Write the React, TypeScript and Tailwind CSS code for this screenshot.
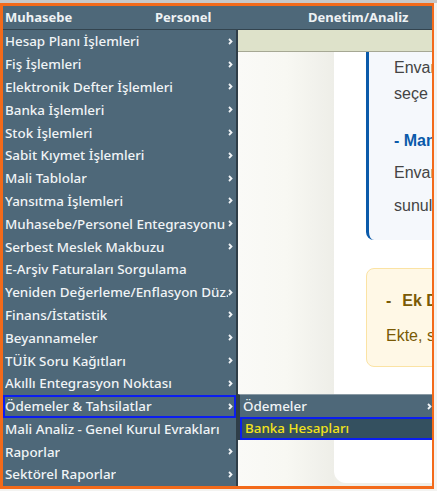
import React from 'react';

const menuItems: { label: string; sub?: boolean; active?: boolean }[] = [
  { label: 'Hesap Planı İşlemleri', sub: true },
  { label: 'Fiş İşlemleri', sub: true },
  { label: 'Elektronik Defter İşlemleri', sub: true },
  { label: 'Banka İşlemleri', sub: true },
  { label: 'Stok İşlemleri', sub: true },
  { label: 'Sabit Kıymet İşlemleri', sub: true },
  { label: 'Mali Tablolar', sub: true },
  { label: 'Yansıtma İşlemleri', sub: true },
  { label: 'Muhasebe/Personel Entegrasyonu', sub: true },
  { label: 'Serbest Meslek Makbuzu', sub: true },
  { label: 'E-Arşiv Faturaları Sorgulama' },
  { label: 'Yeniden Değerleme/Enflasyon Düz.', sub: true },
  { label: 'Finans/İstatistik', sub: true },
  { label: 'Beyannameler', sub: true },
  { label: 'TÜİK Soru Kağıtları', sub: true },
  { label: 'Akıllı Entegrasyon Noktası', sub: true },
  { label: 'Ödemeler & Tahsilatlar', sub: true, active: true },
  { label: 'Mali Analiz - Genel Kurul Evrakları' },
  { label: 'Raporlar', sub: true },
  { label: 'Sektörel Raporlar', sub: true },
];

const Chevron = () => (
  <svg width="5" height="7" viewBox="0 0 5 7" className="shrink-0">
    <path d="M1 1 L3.5 3.5 L1 6" fill="none" stroke="#f2f5f7" strokeWidth="1.8" />
  </svg>
);

const App = () => {
  return (
    <div
      className="relative w-[437px] h-[491px] overflow-hidden bg-[#f3f3f1] border-t-[3px] border-[#c8c8c8]"
      style={{ fontFamily: '"Noto Sans", "Open Sans", sans-serif' }}
    >
      {/* orange outline around the whole app */}
      <div className="relative w-[434px] h-[486px] border-[3px] border-r-[2px] border-[#f36a1a] overflow-hidden bg-white">
        {/* top bar */}
        <div className="flex h-[24px] items-center bg-[#4e6879] border-b border-[#33444f] text-[13px] font-bold text-[#eef2f4]">
          <span className="w-[152px] pl-[2px]">Muhasebe</span>
          <span className="w-[153px]">Personel</span>
          <span>Denetim/Analiz</span>
        </div>

        <div className="flex h-[calc(100%-24px)]">
          {/* left menu */}
          <div className="w-[235px] shrink-0 bg-[#4e6879] border-r-2 border-[#2f3e48]">
            {menuItems.map((item) => (
              <div
                key={item.label}
                className={`flex h-[22.8px] items-center justify-between pl-[2px] pr-[3px] text-[13.4px] font-medium text-[#f1f4f6] whitespace-nowrap ${
                  item.active ? 'outline-2 outline-[#0b1ef0] -outline-offset-2' : ''
                }`}
              >
                <span className="overflow-hidden">{item.label}</span>
                {item.sub && <Chevron />}
              </div>
            ))}
          </div>

          {/* page content */}
          <div className="flex-1 flex flex-col min-w-0">
            <div className="h-[22px] shrink-0 bg-[#dee2ca] border-b border-[#a6a894]" />
            <div className="flex flex-1 bg-[#efefe9]">
              <div className="w-[96px] shrink-0 bg-gradient-to-r from-[#fafaf7] via-[#f8f8f3] to-[#eeeee8]" />
              <div
                className="flex-1 min-w-0 bg-white rounded-bl-[12px] mb-[3px] pl-[32px] text-[16px] text-[#444]"
                style={{ fontFamily: '"Liberation Sans", Arial, sans-serif' }}
              >
                <div className="w-[200px] bg-[#f5f8fc] border-l-[3px] border-[#0a5aaa] rounded-bl-[8px] pl-[25px] pt-[3px] pb-[21px] leading-[26px] whitespace-nowrap">
                  <div>Envanter bilgileri</div>
                  <div>seçe tarih</div>
                  <div className="mt-[21px] font-bold text-[#0a5aaa]">- Manuel</div>
                  <div className="mt-[6px]">Envanter bilgileri</div>
                  <div className="mt-[7px]">sunulan</div>
                </div>
                <div className="mt-[28px] w-[200px] h-[99px] bg-[#fff8e6] border border-[#fbe3a4] rounded-[8px] pl-[19px] pt-[20px] leading-[24px] text-[#7a5a05] whitespace-nowrap">
                  <div className="font-bold">
                    <span className="mr-[11px]">-</span>Ek Dosya
                  </div>
                  <div className="mt-[11px]">Ekte, sunulan</div>
                </div>
              </div>
            </div>
          </div>
        </div>

        {/* flyout for Ödemeler & Tahsilatlar */}
        <div className="absolute left-[235px] top-[388px] w-[197px] bg-[#4e6879] border-t border-l-2 border-t-[#8a9aa4] border-l-[#2f3e48] text-[13.4px] font-medium whitespace-nowrap">
          <div className="flex h-[22px] items-center justify-between pl-[3px] pr-[3px] text-[#f1f4f6]">
            <span>Ödemeler</span>
            <Chevron />
          </div>
          <div className="flex h-[23px] items-center pl-[3px] bg-[#34505f] border-2 border-[#0b1ef0] text-[#f2e21c]">
            Banka Hesapları
          </div>
        </div>
      </div>
    </div>
  );
};

export default App;
